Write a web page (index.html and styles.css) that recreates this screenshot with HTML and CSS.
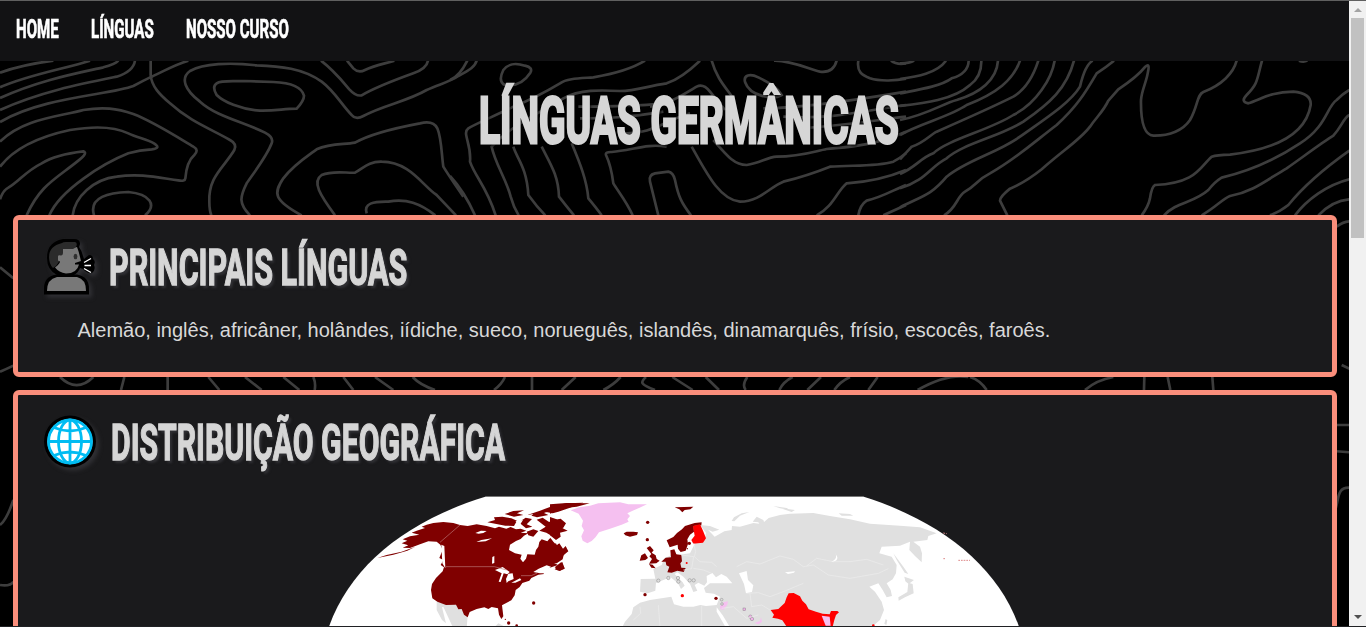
FILE: index.html
```html
<!DOCTYPE html>
<html lang="pt-BR">
<head>
<meta charset="utf-8">
<title>Línguas Germânicas</title>
<link rel="stylesheet" href="styles.css">
</head>
<body>
<div class="page">
  <svg class="topo" viewBox="0 0 1349 627" aria-hidden="true">
    <g transform="scale(.33333)">
      <path d="M0 218C50 200 100 190 160 182M0 262C80 225 200 205 270 182M0 294C120 240 230 220 310 202Q345 193 355 182M0 330C120 275 250 250 350 230Q400 215 405 182M0 366C130 290 330 285 400 258Q430 242 455 230C490 215 520 195 565 182"/>
      <path d="M452 182V225C455 260 480 285 510 310C570 365 640 390 690 420Q712 432 703 450C670 505 625 530 628 605Q628 630 634 646"/>
      <path d="M0 425C70 355 180 350 250 330C310 320 350 325 400 342C460 365 530 410 580 440Q598 450 583 465Q560 485 556 535Q555 545 535 541C470 532 420 520 350 530C280 538 225 590 218 646"/>
      <path d="M0 500C50 435 140 405 210 390C270 380 340 378 385 400C410 412 440 418 462 430Q485 445 455 448Q420 450 385 460C310 490 180 570 148 646"/>
      <path d="M0 598Q10 570 25 563C60 542 75 515 125 490C165 465 215 458 250 454Q265 458 235 482C170 535 120 555 80 646M282 646C265 590 330 578 385 576C450 582 472 615 435 646"/>
      <path d="M750 646C715 610 720 590 740 550C760 520 800 470 815 430Q822 412 795 398C730 365 650 350 600 305C555 270 540 235 570 213C610 190 690 187 770 196C840 198 910 205 965 245C1005 275 1025 315 1055 345Q1068 360 1090 348C1150 315 1220 305 1280 270C1320 252 1350 245 1375 228C1410 210 1425 200 1430 182"/>
      <path d="M650 250C665 240 700 245 735 243L820 246C870 248 905 260 912 287Q912 302 890 326C850 326 830 333 780 332C720 328 670 305 650 285Q635 260 650 250ZM963 182C1000 210 1020 235 1048 268Q1068 290 1085 286C1130 260 1190 238 1240 220Q1280 205 1284 182M1041 182L1060 205Q1075 220 1095 210C1120 198 1150 192 1183 182"/>
      <path d="M905 646C820 600 820 580 850 535C880 495 920 470 950 448C990 430 1030 434 1065 428C1110 402 1180 385 1260 370Q1300 360 1312 385C1325 415 1325 470 1330 500Q1345 525 1390 590M1005 646C960 585 935 545 965 525C1000 510 1040 520 1065 518C1090 505 1105 484 1145 485C1230 485 1270 560 1310 585L1368 646M1100 640C1090 610 1120 604 1165 605C1220 595 1260 610 1306 646"/>
    </g>
    <g transform="translate(450) scale(.33333)">
      <path d="M0 240Q28 230 52 182M160 210C175 190 195 188 225 197Q250 203 241 218C220 250 190 260 160 253Q145 240 160 210ZM75 646C50 590 30 560 0 528"/>
      <path d="M585 182C540 210 490 222 430 232C390 235 350 235 330 250C280 280 240 300 190 320C130 350 80 370 55 385C35 400 65 430 60 485C75 530 110 560 137 646M750 182C710 220 680 240 650 250C590 258 560 273 510 273C450 270 390 268 340 295C270 340 190 370 125 440C135 490 170 540 182 590Q190 620 206 646"/>
      <path d="M190 440C200 475 230 500 235 585Q260 620 286 646M275 440C300 490 325 525 327 590Q350 620 372 646M365 430C390 490 410 540 415 595Q440 625 455 646M548 646C530 605 505 575 490 550C485 510 475 480 468 465Q465 455 485 456C550 450 590 430 650 440M625 646L600 545Q595 525 615 520L655 515Q670 518 675 540C685 590 695 610 723 646"/>
      <path d="M785 182C800 235 825 260 850 295M885 246C880 225 900 220 925 232C960 250 980 260 995 285C970 300 900 290 885 246M972 182C1020 180 1080 208 1110 215Q1150 220 1160 182M1225 182C1220 215 1235 225 1260 235C1290 245 1340 242 1368 236M1323 182Q1340 195 1368 190M600 320C660 310 690 290 740 260Q760 250 780 275L825 330"/>
      <path d="M385 320C480 320 550 320 640 310M390 355C450 355 520 355 640 335M520 400C600 405 650 360 720 340M940 325C1050 325 1220 300 1368 275M1000 350C1150 360 1250 330 1368 315M1050 385C1200 375 1280 360 1368 350"/>
      <path d="M725 440C770 520 810 600 870 605C930 605 960 560 1000 545C1060 530 1090 520 1140 500C1210 495 1280 500 1330 485Q1350 475 1368 460M790 420C825 460 850 495 890 495C930 490 950 472 980 470C1050 470 1090 455 1130 447C1200 440 1260 440 1368 395M1100 646C1150 620 1160 575 1190 550C1270 545 1320 530 1368 510M1225 646Q1230 615 1250 602C1300 590 1330 570 1368 555M1300 646L1368 615"/>
    </g>
    <g transform="translate(900) scale(.33333)">
      <path d="M0 190Q30 190 42 182M0 237C50 230 110 220 138 182M0 280C50 270 120 260 155 235Q205 220 206 182M0 318C70 310 160 300 210 255Q245 230 244 182M0 360C80 345 130 310 170 300C240 280 290 240 294 182M0 405C60 370 150 350 200 315C290 280 340 240 360 182M0 478L35 440C70 430 90 405 110 395C190 360 280 320 340 290Q390 260 415 182"/>
      <path d="M0 522C50 500 60 475 100 460C140 420 270 390 340 345C410 310 455 235 464 182M0 565C80 540 90 500 140 475C190 430 300 410 370 365C450 310 500 265 522 182M0 622C60 590 90 590 140 530C200 480 290 460 360 410C430 360 510 310 540 260Q555 195 578 182M132 646C170 625 170 590 195 575C230 555 230 540 270 520C350 475 410 420 470 375C530 320 555 280 590 220Q620 200 642 182"/>
      <path d="M322 646L300 602Q300 590 330 566C370 550 410 520 425 508C490 450 540 420 570 380C590 350 610 335 625 302L655 268C690 245 720 220 736 200Q750 188 744 215C740 245 725 270 723 300C722 360 730 405 760 407C810 408 850 390 870 360C895 315 890 285 910 276C965 255 1000 220 1010 182"/>
      <path d="M1086 182C1070 240 1075 250 1040 285Q1020 305 1045 310C1080 300 1110 275 1180 275Q1235 280 1232 315C1220 390 1150 445 990 464Q950 465 935 470C900 500 890 550 765 555Q755 560 750 595Q745 620 725 646M792 646C830 605 880 610 925 570Q945 545 965 533C1060 510 1140 470 1200 430C1280 380 1280 320 1310 300Q1330 280 1348 270M905 646C950 620 970 595 990 588C1060 575 1100 540 1160 505C1210 470 1270 425 1300 407C1325 380 1330 355 1348 345M1110 646Q1140 635 1165 615C1210 560 1280 500 1348 452M1185 646C1220 600 1280 555 1348 538M1255 646C1290 610 1320 600 1348 598M1310 680Q1330 665 1348 664M1197 182Q1210 188 1222 182"/>
    </g>
    <g transform="translate(0 205) scale(.33333)">
      <path d="M0 187L40 220M0 500Q20 492 40 482M180 516Q230 565 280 516M373 516L363 555M503 516V555M625 516L658 555M735 516L785 555M850 516L898 555M940 516Q948 535 944 555M1030 516L1060 555M1125 516L1180 555M0 960Q20 945 40 885M0 1140Q30 1145 40 1130"/>
    </g>
    <g transform="translate(400 365) scale(.33333)">
      <path d="M38 36Q60 60 105 75M315 36Q305 58 282 75M396 36V75M527 36L485 75M662 36Q640 60 610 75M738 36C720 52 720 58 765 75M817 36L878 75M917 36L957 75M1042 36Q1025 60 1037 75M1178 36Q1150 50 1138 75M1263 36L1222 75M1350 36Q1320 50 1303 75M1433 36L1405 75M1553 75Q1640 25 1705 36M1710 36Q1740 45 1760 75M2055 75Q2090 45 2140 36M2233 36L2232 75M2303 36L2311 75M2437 36L2440 75M2825 0L2850 12"/>
      <path d="M2800 180H2850M2800 258L2850 262M2800 450C2820 410 2805 365 2850 368"/>
    </g>
  </svg>
  <nav class="nav">
    <a class="nav-link nav-home"><span class="cond">HOME</span></a>
    <a class="nav-link nav-linguas"><span class="cond">LÍNGUAS</span></a>
    <a class="nav-link nav-curso"><span class="cond">NOSSO CURSO</span></a>
  </nav>
  <header class="hero"><h1 class="title"><span class="cond">LÍNGUAS GERMÂNICAS</span></h1></header>
  <main class="cards">
    <section class="card card-main">
      <h2 class="heading">
        <svg class="icon" viewBox="36 230 70 70" width="70" height="70" aria-hidden="true">
          <path d="M63 239h11q6 0 6 5l-1 3q3 4 4 9l1 3 5-4q4 0 4 4 3 2 1 6 2 5-2 8-5 1-9-4l-3-1q-2 5-6 7H57q-10-5-10-17 0-14 12-18z" fill="#000"/>
          <path d="M44 294.500v-6q0-12 12-14h21q12 2 12 14v6z" fill="#000"/>
          <path d="M62 243q1-1 4-1h9q3 1 1 5l-3 3H63v6l-7 10-3 2q-4-4-4-11 0-11 13-14z" fill="#2b2b2b"/>
          <path d="M63 249h10q3-2 4-2 2 5 3 10l1 4-6 2v1.500h4q-2 9-13 9-7-1-11-6 5-4 5-6l-2-1v-4q0-2 3-1 2 0 2-3z" fill="#787878"/>
          <ellipse cx="75.500" cy="256.500" rx="1.900" ry="2.700" fill="#303030"/>
          <path d="M57 277h20q9 2 9 14H47q0-12 10-14z" fill="#787878"/>
          <path d="M84 262.500l7-4M84.500 265.500H91M84 268.500l7 4" stroke="#fff" stroke-width="1.300"/>
        </svg>
        <span class="cond">PRINCIPAIS LÍNGUAS</span>
      </h2>
      <p class="text">Alemão, inglês, africâner, holândes, iídiche, sueco, norueguês, islandês, dinamarquês, frísio, escocês, faroês.</p>
    </section>
    <section class="card card-map">
      <h2 class="heading heading-map">
        <svg class="icon" viewBox="36 405.500 70 70" width="70" height="70" aria-hidden="true">
          <circle cx="70" cy="442" r="26" fill="#000"/><circle cx="70" cy="442" r="22.500" fill="#fff"/>
          <g fill="none" stroke="#00bcf2" stroke-width="2.800"><circle cx="70" cy="442" r="21.500"/><ellipse cx="70" cy="442" rx="11.500" ry="21.500"/><path d="M70 420v44M48 442h44M54 428q16 7 32 0M54 456q16-7 32 0"/></g>
        </svg>
        <span class="cond">DISTRIBUIÇÃO GEOGRÁFICA</span>
      </h2>
      <svg class="map" viewBox="320 496 710 131" width="710" height="131" role="img" aria-label="Mapa das línguas germânicas">
        <path d="M486 496.500H863C944 522 1003 570 1022 636H326C345 570 403 522 486 496.500Z" fill="#fff"/>
        <path d="M486 496.500H863" stroke="#777"/>
        <g transform="translate(320 490) scale(.33333)">
          <path fill="#e0e0e0" d="M350 335L445 350L440 415H400L370 350L366 352L378 400L366 390L350 360ZM520 415L535 400L555 410Z"/>
          <path fill="#800000" d="M420 105L400 99L370 96L340 99L320 104L305 110L315 114L290 122L275 128L298 134L270 139L248 148L262 152L245 160L265 166L248 173L270 174L300 163L325 154L350 155L361 164L368 180L358 204L370 210L362 225L372 232L368 244L348 264L336 282L333 300L337 325L352 335L378 345L408 344L415 358L425 357L432 374L443 382L449 366L470 357L493 352L505 357L515 351L534 355L537 374L544 387L550 379L546 346L574 331L584 316L587 300L599 291L607 279L628 272L634 264L655 254L672 252L668 244L685 235L714 225L698 217L720 205L745 184L737 168L729 176L718 160L710 166L700 155L691 143L682 154L665 148L658 156L655 170L648 180L644 194L622 193L618 206L609 217L601 206L605 194L585 190L567 180L570 164L588 153L602 147L612 137L625 130L602 128L619 122L602 116L588 118L572 111L559 116L537 110L525 115L500 108L470 103L443 108Z"/>
          <path fill="#800000" d="M502 97L525 90L522 82L547 80L574 85L591 92L582 108L556 107L533 103ZM554 72L580 63L612 61L591 70L610 75L582 80ZM596 97L617 83L636 87L620 103L637 110L618 115ZM624 74L660 62L702 58L672 69L685 75L651 82ZM650 89L668 83L686 95L709 97L690 109L715 118L695 126L718 136L704 143L679 128L658 122L677 110ZM660 62L700 47L740 40L790 38L748 54L715 65L698 70ZM700 90L722 86L738 100L730 113L712 108ZM620 125L640 118L655 123L640 140L625 136ZM704 232L724 216L734 235L720 242ZM172 204L220 194L262 182L286 170L245 185L200 195Z"/>
          <path fill="#fff" d="M466 129L483 122L500 123L490 129L476 131ZM469 156L484 150L516 145L497 154ZM517 201L523 198V219L516 221ZM525 240L548 231L569 246L562 253L551 250L542 276L536 275L545 250ZM565 251L578 250L581 267L565 274L560 279L558 267ZM574 278L600 265L604 270L586 278ZM640 246L656 236L680 226L693 230L684 238L700 240L680 250L660 250ZM364 164L373 168L376 235L367 220ZM586 93L609 90L600 104ZM638 97L650 93L662 110L646 111ZM610 77L640 72L630 82ZM650 128L680 137L692 145L680 144Z"/>
          <path stroke="#b77" stroke-width="2" fill="none" d="M420 105L360 157M378 230H523L560 240M603 257H634L652 249"/>
          <g fill="#800000"><circle cx="641" cy="339" r="5"/><circle cx="566" cy="399" r="5"/><circle cx="590" cy="407" r="4"/><circle cx="556" cy="388" r="2"/></g>
        </g>
        <g transform="translate(550 490) scale(.33333)">
          <path fill="#e0e0e0" d="M450 105L480 108L508 119L488 125L474 119L494 140L523 124L545 120L546 108L570 110L610 99L635 102L656 84L690 75L720 71L790 69L840 78L900 88L960 101L1050 107L1110 112L1160 130L1135 138L1132 150L1090 155L1110 170L1116 190L1115 217L1095 198L1078 180L1080 155L1050 167L995 170L988 190L1025 200L1040 225L1038 250L1028 268L1010 280L1022 300L1026 318L1010 322L998 300L985 280L958 290L975 305L995 335L1002 360L990 390L970 407L900 415H215L225 395L245 372L250 352L270 338L300 330L364 320L372 343L400 350L430 350L451 345L468 348L500 345L510 320L492 311L467 308L462 294L480 280H520L547 280L530 260L514 252L498 262L487 249L470 258L471 277L463 287L445 278L434 285L442 302L430 306L420 282L400 260L382 247L374 252L398 277L404 287L393 297L384 280L362 262L342 269L318 279L316 302L293 310L270 305L272 267L316 266L310 237L335 225L343 205L360 197L367 180L376 196L420 190L435 160L452 160L430 150L465 145L468 128Z"/>
          <path fill="#fff" d="M567 250L590 243L594 270L610 286L606 306L588 310L582 282ZM500 352L518 376L540 412H527L500 365Z"/>
          <path fill="#e0e0e0" d="M545 93L552 82L575 70L598 66L570 77L553 94ZM608 95L620 80L640 90L650 118L635 115L625 97ZM670 48L710 54L720 60L690 55ZM866 70L900 72L910 77L875 77ZM690 54L735 60L725 66ZM855 215L860 217L880 265L900 280L890 285L875 266ZM1030 190L1060 230L1075 252L1064 248L1040 210ZM1063 260L1092 270L1076 282L1066 274ZM1075 278L1088 282L1091 310L1065 322L1046 332L1045 322L1062 312L1072 306ZM1007 387L1012 391L1009 405L1003 401Z"/>
          <path fill="#f5c0f0" d="M62 61L88 52L120 47L145 40L210 37L235 43L291 43L267 54L248 62L232 70L240 78L232 88L236 95L215 104L180 116L147 127L137 141L125 153L112 160L98 152L94 139L102 121L95 108L99 92L86 71ZM510 349L520 337L534 334L532 344L521 359L511 358ZM613 399L630 393L633 382L636 395L626 403Z"/>
          <path fill="#800000" d="M0 43L50 39L119 40L80 50L38 55L20 64L0 71ZM0 81L20 88L25 98L42 105L38 115L53 122L30 128L32 140L18 150L0 136ZM0 169L18 160L23 172L20 185L42 191L38 208L20 220H0ZM14 238L37 216L44 236L28 243ZM221 130L230 125L250 125L264 127L261 135L240 140L226 136ZM374 52L430 50L421 58L404 60L397 67L388 58ZM350 151L370 141L381 129L396 118L405 108L434 99L455 97L454 106L431 108L432 125L420 134L412 148L414 162L407 182L392 186L384 176L383 164L359 172ZM361 181L373 178L379 193L394 195L396 214L391 220L394 233L407 234L401 246L382 242L365 248L352 247L358 230L349 226L347 215L334 215L347 203L363 202ZM290 174L300 168L311 181L305 188L317 196L320 207L329 212L319 220L297 221L306 207L298 199L304 192ZM269 212L274 196L285 190L294 204L286 210ZM297 222L308 224L317 235L304 233Z"/>
          <path fill="red" d="M429 108L450 103L459 122L468 145L459 158L430 161L424 150L434 137ZM662 360L685 357L704 339L710 322L716 310L731 309L750 319L757 332L768 343L776 358L798 365L818 371L839 373L843 363L862 363L867 367L858 375L853 390L848 410H710L697 391L684 386L667 383L672 374Z"/>
          <path fill="#f5c0f0" d="M815 377L839 380L842 407H827Z"/><circle cx="970" cy="407" r="4" fill="red"/>
          <g fill="#800000"><circle cx="293" cy="97" r="5"/><circle cx="292" cy="149" r="5"/><circle cx="285" cy="314" r="5"/><circle cx="498" cy="325" r="5"/><circle cx="418" cy="160" r="5"/><circle cx="412" cy="176" r="2"/></g>
          <g fill="red"><circle cx="397" cy="317" r="5"/><circle cx="410" cy="219" r="3"/></g>
          <g fill="#ddd" stroke="#888" stroke-width="1.500"><circle cx="325" cy="272" r="5"/><circle cx="355" cy="264" r="5"/><circle cx="384" cy="264" r="5"/><circle cx="385" cy="275" r="5"/><circle cx="419" cy="271" r="5"/><circle cx="431" cy="271" r="5"/><circle cx="515" cy="329" r="4"/><circle cx="516" cy="342" r="4"/><rect x="579" y="354" width="8" height="8" fill="#f0b0e8"/><circle cx="601" cy="380" r="5" fill="#f0b0e8"/><circle cx="606" cy="387" r="5" fill="#f0b0e8"/></g>
          <path fill="none" stroke="#ededed" stroke-width="2" d="M431 160L437 185L433 200L450 215L485 217L500 230M394 195L431 200L425 236L400 240M430 235L460 240L485 250M560 230L590 215L630 222L690 198L730 208L760 230L790 225L835 255L900 265L985 250L1015 236M770 228L800 205L850 215L900 215L950 208L1000 225M590 310L625 308L660 320L700 305L760 280M270 350L272 370L250 390M325 345L330 410M455 348V410M515 355L550 350L590 385L625 375M600 310L605 350L635 345L660 360"/>
          <path d="M855 187Q866 205 844 216Q864 214 862 202ZM705 247L735 244L732 248L714 252Z" fill="#fff"/>
          <path d="M1180 129L1190 131M1180 206H1187M1225 211H1260" stroke="#d88" stroke-width="3" stroke-dasharray="5 3"/>
        </g>
      </svg>
    </section>
  </main>
</div>
<aside class="scrollbar"><i class="arrow arrow-up"></i><div class="thumb"></div><i class="arrow arrow-down"></i></aside>
</body>
</html>
```
FILE: styles.css
```css
* { box-sizing: border-box; }
body {
  margin: 0;
  height: 627px;
  display: flex;
  overflow: hidden;
  background: #000;
  border-top: 1px solid #606060;
  border-bottom: 1px solid #202124;
  font-family: "Liberation Sans", Arial, sans-serif;
}
.page { position: relative; width: 1349px; height: 625px; overflow: hidden; }
.topo {
  position: absolute;
  top: -1px;
  left: 0;
  width: 1349px;
  height: 627px;
  fill: none;
  stroke: #3d3d3d;
  stroke-width: 8;
}
.nav {
  position: relative;
  display: flex;
  gap: 32px;
  height: 60px;
  padding: 0 16px;
  background: #121214;
  color: #fff;
  font: 700 25px/58px Roboto, sans-serif;
  -webkit-text-stroke: .7px #fff;
}
.nav-link { white-space: nowrap; }
.nav-home { width: 43px; }
.nav-linguas { width: 63px; }
.nav-curso { width: 103px; }
.cond {
  display: inline-block;
  transform: scaleX(.603);
  transform-origin: left center;
  white-space: nowrap;
}
.hero { position: relative; height: 154px; padding: 20px 0 0 479px; }
.title {
  width: 422px;
  margin: 0;
  color: #d6d6d6;
  font: 700 64px/82px Roboto, sans-serif;
  -webkit-text-stroke: 3px #d6d6d6;
  text-shadow: 3px 3px 3px rgba(0, 0, 0, .8);
}
.title .cond { transform: scaleX(.608); }
.cards { position: relative; display: flex; flex-direction: column; gap: 13px; padding: 0 12px 0 13px; }
.card { border: 5px solid #fa8e7b; border-radius: 6px; background: #1a1a1c; overflow: hidden; }
.card-main { height: 162px; }
.card-map { height: 270px; }
.heading {
  display: flex;
  align-items: center;
  height: 90px;
  margin: 0;
  padding-left: 18px;
  color: #d6d6d6;
  font: 700 50px/60px Roboto, sans-serif;
  -webkit-text-stroke: 1.4px #d6d6d6;
  text-shadow: 4px 3px 3px #303034;
}
.heading .cond { margin: 5px 0 0 3px; transform: scaleX(.61); }
.heading-map .cond { margin-left: 5px; transform: scaleX(.604); }
.icon { flex: none; filter: drop-shadow(3px 3px 2px #303034); }
.text { margin: 8px 0 0 59.500px; color: #d8d8d8; font-size: 20px; line-height: 24px; }
.map { display: block; margin: 11px auto 0; }
.scrollbar {
  width: 17px;
  display: flex;
  flex-direction: column;
  align-items: center;
  background: #f1f1f1;
}
.arrow { border: 4px solid transparent; width: 0; height: 0; }
.arrow-up { margin-top: 3px; border-bottom-color: #a3a3a3; }
.arrow-down { margin: auto 0 3px; border-top-color: #505050; }
.thumb { width: 13px; height: 220px; margin-top: 6px; background: #c1c1c1; }
```
